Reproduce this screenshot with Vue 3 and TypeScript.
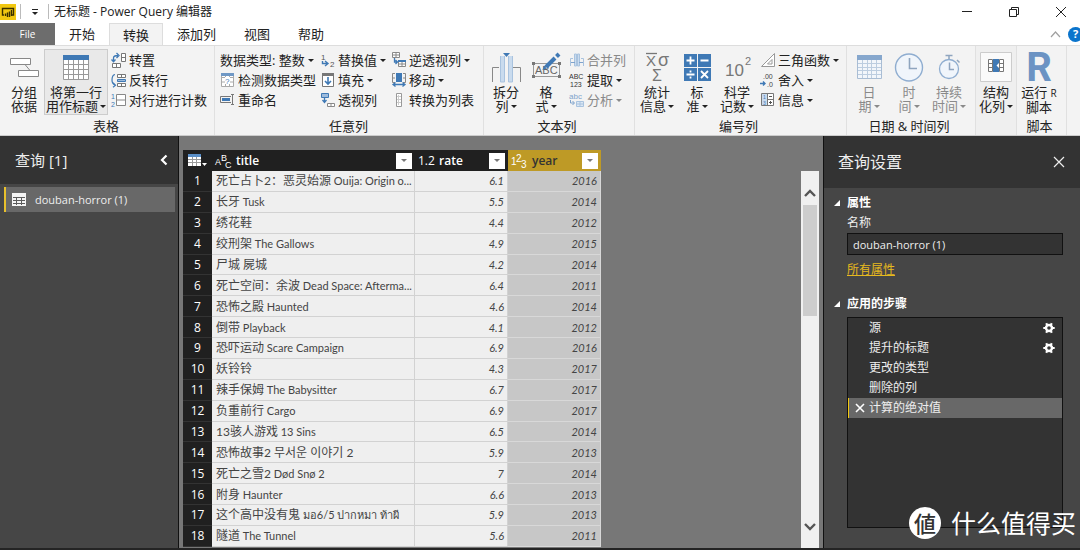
<script setup lang="ts">
import { ref } from 'vue'

interface Film {
  title: string
  latin?: string
  rate: string
  year: number
}

interface Step {
  name: string
  configurable: boolean
}

const tabs: string[] = ['开始', '转换', '添加列', '视图', '帮助']
const activeTab = ref('转换')

const films: Film[] = [
  { title: '死亡占卜2：恶灵始源', latin: 'Ouija: Origin o...', rate: '6.1', year: 2016 },
  { title: '长牙', latin: 'Tusk', rate: '5.5', year: 2014 },
  { title: '绣花鞋', rate: '4.4', year: 2012 },
  { title: '绞刑架', latin: 'The Gallows', rate: '4.9', year: 2015 },
  { title: '尸城 屍城', rate: '4.2', year: 2014 },
  { title: '死亡空间：余波', latin: 'Dead Space: Afterma...', rate: '6.4', year: 2011 },
  { title: '恐怖之殿', latin: 'Haunted', rate: '4.6', year: 2014 },
  { title: '倒带', latin: 'Playback', rate: '4.1', year: 2012 },
  { title: '恐吓运动', latin: 'Scare Campaign', rate: '6.9', year: 2016 },
  { title: '妖铃铃', rate: '4.3', year: 2017 },
  { title: '辣手保姆', latin: 'The Babysitter', rate: '6.7', year: 2017 },
  { title: '负重前行', latin: 'Cargo', rate: '6.9', year: 2017 },
  { title: '13骇人游戏', latin: '13 Sins', rate: '6.5', year: 2014 },
  { title: '恐怖故事2 무서운 이야기 2', rate: '5.9', year: 2013 },
  { title: '死亡之雪2', latin: 'Død Snø 2', rate: '7', year: 2014 },
  { title: '附身', latin: 'Haunter', rate: '6.6', year: 2013 },
  { title: '这个高中没有鬼', latin: 'มอ6/5 ปากหมา ท้าผี', rate: '5.9', year: 2013 },
  { title: '隧道', latin: 'The Tunnel', rate: '5.6', year: 2011 },
]

const steps: Step[] = [
  { name: '源', configurable: true },
  { name: '提升的标题', configurable: true },
  { name: '更改的类型', configurable: false },
  { name: '删除的列', configurable: false },
  { name: '计算的绝对值', configurable: false },
]
const activeStep = ref(4)
const queryName = ref('douban-horror (1)')
</script>

<template>
  <div class="window">
    <header class="titlebar">
      <svg class="logo" width="16" height="16" viewBox="0 0 16 16">
        <rect width="16" height="16" fill="#f2c811" />
        <path d="M4 11H2.500V4.500H13.500V11H12" fill="none" stroke="#3a3000" stroke-width="1.400" />
        <path d="M5.500 12V9.500M7.500 13V8.500M9.500 13V7.500M11.500 12V6" stroke="#3a3000" stroke-width="1.400" />
      </svg>
      <span class="bar"></span>
      <button class="quick" type="button" aria-label="自定义快速访问工具栏">
        <svg width="8" height="8" viewBox="0 0 8 8"><path d="M1 1.500H7" stroke="#222" /><path d="M1 4H7L4 7Z" fill="#222" /></svg>
      </button>
      <span class="bar"></span>
      <h1>无标题 - Power Query 编辑器</h1>
      <div class="controls">
        <button type="button" aria-label="最小化"><svg width="12" height="12" viewBox="0 0 12 12"><path d="M1 5.500H11" stroke="#222" /></svg></button>
        <button type="button" aria-label="还原"><svg width="12" height="12" viewBox="0 0 12 12"><path d="M1.500 3.500H8.500V10.500H1.500ZM3.500 3.500V1.500H10.500V8.500H8.500" fill="none" stroke="#222" /></svg></button>
        <button type="button" aria-label="关闭"><svg width="12" height="12" viewBox="0 0 12 12"><path d="M1 1L11 11M11 1L1 11" stroke="#222" /></svg></button>
      </div>
    </header>

    <nav class="tabs">
      <button class="file" type="button">File</button>
      <button
        v-for="tab in tabs"
        :key="tab"
        type="button"
        class="tab"
        :class="{ active: tab === activeTab }"
        @click="activeTab = tab"
      >{{ tab }}</button>
      <div class="tabs-end">
        <button type="button" aria-label="折叠功能区"><svg width="11" height="7" viewBox="0 0 11 7"><path d="M1 6L5.500 1L10 6" fill="none" stroke="#a0a0a0" stroke-width="1.200" /></svg></button>
        <button type="button" class="help">?</button>
      </div>
    </nav>

    <div class="ribbon">
      <section class="group g-table">
        <div class="tools">
          <button type="button" class="big">
            <svg width="32" height="32" viewBox="0 0 32 32">
              <path d="M2.500 6.500H22.500V12.500H2.500ZM10.500 18.500H30.500V24.500H10.500ZM17 12.500L22 18.500" fill="#fff" stroke="#888" />
            </svg>
            <span>分组<br />依据</span>
          </button>
          <button type="button" class="big selected">
            <svg width="32" height="32" viewBox="0 0 32 32">
              <path d="M3.500 3.500H28.500V27.500H3.500Z" fill="#fff" stroke="#999" />
              <path d="M8.500 8V27M13.500 8V27M18.500 8V27M23.500 8V27M4 12.500H28M4 17.500H28M4 22.500H28" stroke="#999" />
              <rect x="3" y="3" width="26" height="5" fill="#3f79b5" />
            </svg>
            <span>将第一行<br />用作标题<i class="caret"></i></span>
          </button>
          <div class="stack">
            <button type="button" class="small">
              <svg width="16" height="16" viewBox="0 0 16 16">
                <path d="M10.500 1.500H14.500V9.500H10.500ZM10.500 5.500H14.500M1.500 11.500H9.500V15.500H1.500ZM5.500 11.500V15.500" fill="#fff" stroke="#777" />
                <path d="M2.500 9.500V6Q2.500 3.500 7 3.500M0.500 7.500L2.500 9.700L4.500 7.500M5.500 1L8 3.500L5.500 6" fill="none" stroke="#3f79b5" stroke-width="1.300" />
              </svg>
              转置
            </button>
            <button type="button" class="small">
              <svg width="16" height="16" viewBox="0 0 16 16">
                <path d="M6.500 2.500H14.500V5.500H6.500ZM10.500 2.500V5.500M6.500 11.500H14.500V14.500H6.500ZM10.500 11.500V14.500" fill="#fff" stroke="#777" />
                <path d="M6.500 7.500H14.500V9.500H6.500Z" fill="#9dbbdc" stroke="#3f79b5" />
                <path d="M4 2.500Q1 3 1 8Q1 12 4 13M2 10.800L4.500 13.200L2 15.200" fill="none" stroke="#3f79b5" stroke-width="1.200" />
              </svg>
              反转行
            </button>
            <button type="button" class="small">
              <svg width="16" height="16" viewBox="0 0 16 16">
                <text x="0" y="7" font-size="7" fill="#3f79b5">1</text>
                <text x="0" y="15" font-size="7" fill="#3f79b5">2</text>
                <path d="M5.500 2.500H14.500V13.500H5.500ZM5.500 8H14.500" fill="#fff" stroke="#888" />
              </svg>
              对行进行计数
            </button>
          </div>
        </div>
        <h2>表格</h2>
      </section>

      <section class="group g-any">
        <div class="tools">
          <div class="stack wide">
            <button type="button" class="small">数据类型: 整数<i class="caret"></i></button>
            <button type="button" class="small">
              <svg width="16" height="16" viewBox="0 0 16 16">
                <path d="M1.500 1.500H13.500V14.500H1.500ZM1.500 5.500H13.500M1.500 10H13.500M5.500 4V14M9.500 4V14" fill="#fff" stroke="#aaa" />
                <rect x="1" y="1" width="13" height="3" fill="#6f98c5" />
                <rect x="5" y="5" width="5" height="7" fill="#fff" />
                <text x="5" y="12" font-size="8" fill="#3f79b5">?</text>
              </svg>
              检测数据类型
            </button>
            <button type="button" class="small">
              <svg width="16" height="16" viewBox="0 0 16 16">
                <path d="M11 4.500H0.500V10.500H11M11 2.500H14M12.500 2.500V12.500M11 12.500H14" fill="none" stroke="#777" />
                <rect x="2" y="6" width="8" height="3" fill="#3f79b5" />
              </svg>
              重命名
            </button>
          </div>
          <div class="stack mid">
            <button type="button" class="small">
              <svg width="16" height="16" viewBox="0 0 16 16">
                <text x="1" y="8" font-size="8" fill="#555">1</text>
                <text x="10" y="15" font-size="8" fill="#555">2</text>
                <path d="M2.500 9V11.500H7.500M5 9L8 11.500L5 14" fill="none" stroke="#3f79b5" stroke-width="1.400" />
              </svg>
              替换值<i class="caret"></i>
            </button>
            <button type="button" class="small">
              <svg width="16" height="16" viewBox="0 0 16 16">
                <path d="M2.500 1.500H13.500V14.500H2.500Z" fill="#fff" stroke="#777" />
                <rect x="2" y="1" width="12" height="3" fill="#777" />
                <path d="M8 5V12M5 9L8 12L11 9" fill="none" stroke="#3f79b5" stroke-width="1.600" />
              </svg>
              填充<i class="caret"></i>
            </button>
            <button type="button" class="small">
              <svg width="16" height="16" viewBox="0 0 16 16">
                <path d="M1.500 1.500H8.500V5.500H1.500Z" fill="#9dbbdc" stroke="#3f79b5" />
                <path d="M4.500 6V10M2.500 8L4.500 10.500L6.500 8" fill="none" stroke="#3f79b5" stroke-width="1.300" />
                <path d="M7.500 11.500H14.500V14.500H7.500ZM11 11.500V14.500" fill="#fff" stroke="#888" />
              </svg>
              透视列
            </button>
          </div>
          <div class="stack">
            <button type="button" class="small">
              <svg width="16" height="16" viewBox="0 0 16 16">
                <path d="M1.500 0.500H8.500V5.500H1.500ZM1.500 3H8.500M5 0.500V5.500" fill="#fff" stroke="#888" />
                <path d="M3.500 6V10H6M4.500 8L6.500 10L4.500 12" fill="none" stroke="#3f79b5" stroke-width="1.300" />
                <path d="M7.500 8.500H14.500V14.500H7.500ZM7.500 12H14.500M11 10V14.500" fill="#fff" stroke="#888" />
                <rect x="7" y="8" width="8" height="2" fill="#3f79b5" />
              </svg>
              逆透视列<i class="caret"></i>
            </button>
            <button type="button" class="small">
              <svg width="16" height="16" viewBox="0 0 16 16">
                <path d="M4 1.500H1.500V10.500H4M1.500 6H4M12 1.500H14.500V10.500H12M14.500 6H12" fill="none" stroke="#888" />
                <rect x="5" y="1" width="6" height="9" fill="#3f79b5" />
                <path d="M2 12.500H14M4.500 10.500L2 12.500L4.500 14.500M11.500 10.500L14 12.500L11.500 14.500" fill="none" stroke="#3f79b5" stroke-width="1.300" />
              </svg>
              移动<i class="caret"></i>
            </button>
            <button type="button" class="small">
              <svg width="16" height="16" viewBox="0 0 16 16">
                <path d="M5.500 1.500H10.500V14.500H5.500Z" fill="#fff" stroke="#999" />
                <path d="M7.500 3V13M6 4.500H10M6 7.500H10M6 10.500H10" stroke="#ccc" />
              </svg>
              转换为列表
            </button>
          </div>
        </div>
        <h2>任意列</h2>
      </section>

      <section class="group g-text">
        <div class="tools">
          <button type="button" class="big">
            <svg width="32" height="32" viewBox="0 0 32 32">
              <path d="M9 15.500H2.500V30M23 15.500H30.500V30" fill="none" stroke="#888" />
              <path d="M10.500 4V30H14.500V4M18.500 4V30H22.500V4" fill="#c9dbee" stroke="#a9c3df" />
              <path d="M13 1H20L16.500 5Z" fill="#3f79b5" />
            </svg>
            <span>拆分<br />列<i class="caret"></i></span>
          </button>
          <button type="button" class="big">
            <svg width="32" height="32" viewBox="0 0 32 32">
              <path d="M3.500 11.500H29.500V24.500H3.500Z" fill="none" stroke="#999" />
              <path d="M2 10H5V13H2ZM28 10H31V13H28ZM2 23H5V26H2ZM28 23H31V26H28Z" fill="#777" />
              <text x="5" y="22" font-size="11" fill="#666">ABC</text>
              <path d="M16 15L25 6" stroke="#3f79b5" stroke-width="4" />
              <path d="M26.500 4.500L29 2" stroke="#3f79b5" stroke-width="4" />
              <path d="M14 13.500L12.500 18L17 16.500Z" fill="#3f79b5" />
            </svg>
            <span>格<br />式<i class="caret"></i></span>
          </button>
          <div class="stack">
            <button type="button" class="small off">
              <svg width="16" height="16" viewBox="0 0 16 16">
                <path d="M4 6.500H1.500V14M12 6.500H14.500V14" fill="none" stroke="#a9c3df" />
                <path d="M5.500 2V14H7.500V2ZM8.500 2V14H10.500V2Z" fill="#c9dbee" stroke="#a9c3df" />
                <path d="M2 10.500H6M14 10.500H10" stroke="#7fa3cc" />
              </svg>
              合并列
            </button>
            <button type="button" class="small">
              <svg width="16" height="16" viewBox="0 0 16 16">
                <text x="0" y="7" font-size="7" fill="#333">ABC</text>
                <text x="1" y="15" font-size="7" fill="#333">123</text>
              </svg>
              提取<i class="caret"></i>
            </button>
            <button type="button" class="small off">
              <svg width="16" height="16" viewBox="0 0 16 16">
                <text x="0" y="7" font-size="8" fill="#7fa3cc">abc</text>
                <path d="M1.500 8V11H5M3.500 9L5.500 11L3.500 13" fill="none" stroke="#7fa3cc" />
                <path d="M7.500 9.500H14.500V14.500H7.500ZM7.500 12H14.500M11 10V14.500" fill="#dbe7f4" stroke="#a9c3df" />
              </svg>
              分析<i class="caret"></i>
            </button>
          </div>
        </div>
        <h2>文本列</h2>
      </section>

      <section class="group g-number">
        <div class="tools">
          <button type="button" class="big">
            <svg width="32" height="32" viewBox="0 0 32 32">
              <path d="M5 1.500H16" stroke="#777" stroke-width="1.300" />
              <text x="5" y="14" font-size="15" fill="#777">X</text>
              <text x="17" y="14" font-size="18" fill="#777">σ</text>
              <text x="11" y="29" font-size="16" fill="#777">Σ</text>
            </svg>
            <span>统计<br />信息<i class="caret"></i></span>
          </button>
          <button type="button" class="big">
            <svg width="32" height="32" viewBox="0 0 32 32">
              <path d="M3 2H16V15H3ZM17 2H30V15H17ZM3 16H16V29H3ZM17 16H30V29H17Z" fill="#3f79b5" />
              <path d="M5.500 8.500H13.500M9.500 4.500V12.500M19.500 8.500H27.500M5.500 22.500H13.500M20 19L27 26M27 19L20 26M9.500 18.500V20.500M9.500 24.500V26.500" stroke="#fff" stroke-width="1.800" />
            </svg>
            <span>标<br />准<i class="caret"></i></span>
          </button>
          <button type="button" class="big">
            <svg width="32" height="32" viewBox="0 0 32 32">
              <text x="4" y="24" font-size="17" fill="#777">10</text>
              <text x="24" y="13" font-size="11" fill="#777">2</text>
            </svg>
            <span>科学<br />记数<i class="caret"></i></span>
          </button>
          <div class="stack">
            <button type="button" class="small">
              <svg width="16" height="16" viewBox="0 0 16 16">
                <path d="M1.500 14.500H14.500V1.500ZM7.500 12H12V7.500Z" fill="#fff" stroke="#999" />
              </svg>
              三角函数<i class="caret"></i>
            </button>
            <button type="button" class="small">
              <svg width="16" height="16" viewBox="0 0 16 16">
                <text x="3" y="7" font-size="7" fill="#444">.00</text>
                <text x="7" y="15" font-size="7" fill="#444">.0</text>
                <path d="M0 11.500H5M3 9.500L5 11.500L3 13.500" fill="none" stroke="#3f79b5" stroke-width="1.400" />
              </svg>
              舍入<i class="caret"></i>
            </button>
            <button type="button" class="small">
              <svg width="16" height="16" viewBox="0 0 16 16">
                <path d="M1.500 1.500H13.500V13.500H1.500ZM7.500 1.500V13.500M7.500 7.500H13.500" fill="#fff" stroke="#777" />
                <rect x="2" y="2" width="5" height="11" fill="#c9dbee" />
                <text x="3" y="7" font-size="5" fill="#3f79b5">1</text>
                <text x="3" y="13" font-size="5" fill="#3f79b5">3</text>
                <path d="M9 4.500H12M9 10.500H12M10.500 9V12" stroke="#555" />
              </svg>
              信息<i class="caret"></i>
            </button>
          </div>
        </div>
        <h2>编号列</h2>
      </section>

      <section class="group g-date">
        <div class="tools">
          <button type="button" class="big off">
            <svg width="32" height="32" viewBox="0 0 32 32">
              <path d="M4.500 4.500H28.500V26.500H4.500Z" fill="#f2f6fb" stroke="#a9bdd4" />
              <path d="M9.500 8V26M14.500 8V26M18.500 8V26M23.500 8V26M5 11.500H28M5 15.500H28M5 18.500H28M5 22.500H28" stroke="#bccde0" />
              <rect x="4" y="3" width="25" height="5" fill="#86a7cd" />
            </svg>
            <span>日<br />期<i class="caret"></i></span>
          </button>
          <button type="button" class="big off">
            <svg width="32" height="32" viewBox="0 0 32 32">
              <circle cx="16" cy="15.500" r="13.500" fill="#f0f5fb" stroke="#8fadd0" stroke-width="1.400" />
              <path d="M16.500 6V16.500H24" fill="none" stroke="#8fa5bf" stroke-width="1.600" />
            </svg>
            <span>时<br />间<i class="caret"></i></span>
          </button>
          <button type="button" class="big off">
            <svg width="32" height="32" viewBox="0 0 32 32">
              <circle cx="16" cy="17" r="9.500" fill="#f0f5fb" stroke="#8fadd0" stroke-width="1.300" />
              <path d="M12.500 3.500H19.500M16 3.500V7M24 8L26.500 10.500M16.500 10.500V17.500H21" fill="none" stroke="#8fa5bf" stroke-width="1.500" />
            </svg>
            <span>持续<br />时间<i class="caret"></i></span>
          </button>
        </div>
        <h2>日期 &amp; 时间列</h2>
      </section>

      <section class="group g-structured">
        <div class="tools">
          <button type="button" class="big framed">
            <svg width="32" height="32" viewBox="0 0 32 32">
              <path d="M0.500 0.500H31.500V29.500H0.500Z" fill="#fafafa" stroke="#ccc" />
              <path d="M8.500 7.500H12.500V19.500H8.500ZM8.500 11.500H12.500M8.500 15.500H12.500M19.500 7.500H23.500V19.500H19.500ZM19.500 11.500H23.500M19.500 15.500H23.500" fill="#fff" stroke="#777" />
              <rect x="13" y="7" width="6" height="13" fill="#3f79b5" />
              <path d="M19 11L16.500 13.500L19 16" fill="#fff" />
            </svg>
            <span>结构<br />化列<i class="caret"></i></span>
          </button>
        </div>
      </section>

      <section class="group g-script">
        <div class="tools">
          <button type="button" class="big">
            <b class="r-mark">R</b>
            <span>运行 <small>R</small><br />脚本</span>
          </button>
        </div>
        <h2>脚本</h2>
      </section>
    </div>

    <main class="workspace">
      <aside class="queries">
        <header>
          <h2>查询 [1]</h2>
          <button type="button" aria-label="折叠"><svg width="8" height="12" viewBox="0 0 8 12"><path d="M6.500 1.500L2 6L6.500 10.500" fill="none" stroke="#fff" stroke-width="2.200" /></svg></button>
        </header>
        <button type="button" class="query">
          <svg width="14" height="13" viewBox="0 0 14 13">
            <rect width="14" height="13" fill="#f4f4f4" />
            <path d="M1 4.500H13M1 7.500H13M1 10.500H13M4.500 4V12M9.500 4V12" stroke="#5c5c5c" />
          </svg>
          douban-horror (1)
        </button>
      </aside>

      <div class="preview">
        <table>
          <colgroup>
            <col class="c-index" />
            <col class="c-title" />
            <col class="c-rate" />
            <col class="c-year" />
          </colgroup>
          <thead>
            <tr>
              <th class="corner">
                <svg width="20" height="14" viewBox="0 0 20 14">
                  <rect width="13" height="12" fill="#fff" />
                  <rect width="13" height="3" fill="#5b8fc7" />
                  <path d="M0 5.500H13M0 8.500H13M4.500 3V12M8.500 3V12" stroke="#999" />
                  <path d="M14 9H19L16.500 12Z" fill="#fff" />
                </svg>
              </th>
              <th>
                <div class="head">
                  <svg class="kind" width="16" height="16" viewBox="0 0 16 16"><g fill="#fff" font-size="9"><text x="0" y="12">A</text><text x="6" y="8">B</text><text x="10" y="15">C</text></g></svg>
                  <span>title</span>
                  <button type="button" aria-label="筛选 title"><i class="caret"></i></button>
                </div>
              </th>
              <th>
                <div class="head">
                  <span class="kind decimal">1.2</span>
                  <span>rate</span>
                  <button type="button" aria-label="筛选 rate"><i class="caret"></i></button>
                </div>
              </th>
              <th class="picked">
                <div class="head">
                  <svg class="kind" width="16" height="16" viewBox="0 0 16 16"><g fill="#fff" font-size="10"><text x="0" y="12">1</text><text x="5" y="9">2</text><text x="10" y="15">3</text></g></svg>
                  <span>year</span>
                  <button type="button" aria-label="筛选 year"><i class="caret"></i></button>
                </div>
              </th>
            </tr>
          </thead>
          <tbody>
            <tr v-for="(film, i) in films" :key="film.title">
              <th scope="row">{{ i + 1 }}</th>
              <td>{{ film.title }}<span v-if="film.latin" class="latin">&nbsp;{{ film.latin }}</span></td>
              <td class="num">{{ film.rate }}</td>
              <td class="num picked">{{ film.year }}</td>
            </tr>
          </tbody>
        </table>
        <div class="scroll">
          <svg width="12" height="8" viewBox="0 0 12 8"><path d="M1 7L6 2L11 7" fill="none" stroke="#555" stroke-width="2.400" /></svg>
          <div class="track"><div class="thumb"></div></div>
          <svg width="12" height="8" viewBox="0 0 12 8"><path d="M1 1L6 6L11 1" fill="none" stroke="#555" stroke-width="2.400" /></svg>
        </div>
      </div>

      <aside class="settings">
        <header>
          <h2>查询设置</h2>
          <button type="button" aria-label="关闭查询设置"><svg width="12" height="12" viewBox="0 0 12 12"><path d="M1 1L11 11M11 1L1 11" stroke="#eee" stroke-width="1.200" /></svg></button>
        </header>
        <div class="section">
          <h3><svg width="6" height="6" viewBox="0 0 6 6"><path d="M6 0V6H0Z" fill="#fff" /></svg>属性</h3>
          <label for="query-name">名称</label>
          <input id="query-name" v-model="queryName" type="text" />
          <a href="#">所有属性</a>
        </div>
        <div class="section steps">
          <h3><svg width="6" height="6" viewBox="0 0 6 6"><path d="M6 0V6H0Z" fill="#fff" /></svg>应用的步骤</h3>
          <ol>
            <li v-for="(step, i) in steps" :key="step.name" :class="{ active: i === activeStep }">
              <span class="remove"><svg v-if="i === activeStep" width="10" height="10" viewBox="0 0 10 10"><path d="M1 1L9 9M9 1L1 9" stroke="#fff" stroke-width="1.600" /></svg></span>
              <button type="button" class="step" @click="activeStep = i">{{ step.name }}</button>
              <button v-if="step.configurable" type="button" class="gear" :aria-label="`设置 ${step.name}`">
                <svg width="12" height="12" viewBox="0 0 12 12">
                  <circle cx="6" cy="6" r="3" fill="none" stroke="#fff" stroke-width="2.400" />
                  <path d="M3.200 1.200L4.200 3M8.800 1.200L7.800 3M3.200 10.800L4.200 9M8.800 10.800L7.800 9M0.300 6H2.500M9.500 6H11.700" stroke="#fff" stroke-width="2.200" />
                </svg>
              </button>
            </li>
          </ol>
        </div>
      </aside>
    </main>

    <div class="watermark"><span class="badge">値</span><span>什么值得买</span></div>
  </div>
</template>

<style>
body {
  margin: 0;
}
</style>

<style scoped>
.window {
  position: relative;
  display: flex;
  flex-direction: column;
  height: 100vh;
  overflow: hidden;
  background: #fff;
  color: #222;
  font: 13px/14px "Open Sans", "Noto Sans CJK SC", sans-serif;
}
h1, h2, h3, ol {
  margin: 0;
  padding: 0;
  font-weight: 400;
}
button {
  padding: 0;
  border: 0;
  background: none;
  color: inherit;
  font: inherit;
}
svg {
  display: block;
  flex: none;
  overflow: visible;
}
svg text {
  font-family: "Liberation Sans", sans-serif;
  font-weight: 400;
}
.caret {
  display: inline-block;
  flex: none;
  margin-left: 4px;
  border: 3px solid transparent;
  border-top-color: currentColor;
  border-bottom: 0;
  vertical-align: 3px;
}

.titlebar {
  display: flex;
  flex: none;
  align-items: center;
  height: 23px;
}
.titlebar h1 {
  margin-left: 5px;
  font-size: 12px;
}
.bar {
  width: 1px;
  height: 15px;
  margin-left: 4px;
  background: #bbb;
}
.quick {
  margin: 0 5px 0 10px;
}
.controls {
  display: flex;
  gap: 35px;
  margin-left: auto;
  margin-right: 13px;
}

.tabs {
  display: flex;
  flex: none;
  height: 22px;
}
.tab {
  padding: 0 14px;
}
.tab.active {
  padding: 0 13px;
  border: 1px solid #ddd;
  border-bottom: 0;
  background: #f3f3f3;
}
.file {
  width: 55px;
  background: #6d6d6d;
  color: #fff;
  font-size: 10px;
}
.tabs-end {
  display: flex;
  align-items: center;
  gap: 7px;
  margin-left: auto;
  margin-right: -3px;
}
.help {
  width: 15px;
  height: 15px;
  border-radius: 50%;
  background: #0a74cc;
  color: #fff;
  font-size: 11px;
  font-weight: 700;
}

.ribbon {
  display: flex;
  flex: none;
  height: 89px;
  border-top: 1px solid #ddd;
  border-bottom: 1px solid #ccc;
  background: #f3f3f3;
}
.group {
  display: flex;
  flex: none;
  flex-direction: column;
  box-sizing: border-box;
  border-right: 1px solid #e0e0e0;
  padding: 3px 0 0 2px;
}
.group h2 {
  margin-right: 6px;
  font-size: 13px;
  line-height: 16px;
  text-align: center;
}
.g-table { width: 215px; padding-left: 4px; }
.g-any { width: 269px; padding-left: 5px; }
.g-text { width: 151px; }
.g-number { width: 212px; }
.g-date { width: 129px; }
.g-structured { width: 41px; padding-left: 0; background: #efefef; }
.g-script { width: 50px; }
.tools {
  display: flex;
  height: 69px;
}
.big {
  display: flex;
  flex-direction: column;
  align-items: center;
  width: 40px;
  padding-top: 3px;
  white-space: nowrap;
}
.big span {
  margin-top: 1px;
}
.big .caret {
  margin-left: 2px;
}
.selected {
  box-sizing: border-box;
  width: 64px;
  height: 66px;
  padding-top: 2px;
  border: 1px solid #ccc;
  background: #e9e9e9;
}
.off {
  color: #8a8a8a;
}
.r-mark {
  height: 32px;
  color: #6b93c3;
  font: 700 40px/32px Roboto, sans-serif;
}
.big small {
  font-size: 10px;
}
.stack {
  display: flex;
  flex-direction: column;
  padding: 1px 0 0 3px;
}
.small {
  display: flex;
  align-items: center;
  gap: 2px;
  height: 20px;
  white-space: nowrap;
}
.small .caret {
  margin-left: 1px;
}
.g-any .stack { padding-left: 0; }
.wide { width: 100px; }
.mid { width: 71px; }

.workspace {
  display: flex;
  flex: 1;
  min-height: 0;
  border-bottom: 2px solid #242424;
  background: #777;
}
.queries {
  width: 178px;
  border-right: 1px solid #111;
  background: #464646;
  color: #eee;
}
.queries header {
  display: flex;
  align-items: center;
  justify-content: space-between;
  height: 48px;
  padding: 0 10px 0 15px;
  background: #333;
}
.queries h2 {
  font-size: 15px;
  line-height: 20px;
}
.query {
  display: flex;
  align-items: center;
  gap: 9px;
  box-sizing: border-box;
  width: 171px;
  height: 25px;
  margin: 3px 0 0 4px;
  padding-left: 6px;
  border-left: 2px solid #e8c02c;
  background: #686868;
  font-size: 11px;
}

.preview {
  display: flex;
  flex: 1;
  justify-content: space-between;
  min-width: 0;
  padding: 14px 4px 0;
}
table {
  width: 418px;
  height: calc(100% - 1px);
  border-collapse: separate;
  border-spacing: 0;
  table-layout: fixed;
  color: #444;
  font: 12px/14px Lato, "Noto Sans CJK SC", "Noto Sans CJK KR", sans-serif;
}
.c-index { width: 29px; }
.c-title { width: 203px; }
.c-rate { width: 93px; }
.c-year { width: 93px; }
th, td {
  padding: 1px 4px 0;
  overflow: hidden;
  white-space: nowrap;
}
thead th {
  height: 21px;
  padding: 0 3px;
  background: #202020;
  color: #fff;
  font: 600 12px/14px "Open Sans", sans-serif;
}
thead th.corner {
  padding: 0 0 0 5px;
}
thead th.picked {
  background: #be9a26;
  color: #333;
}
.head {
  display: flex;
  align-items: center;
}
.kind {
  flex: none;
  width: 16px;
  margin-right: 5px;
}
.kind.decimal {
  font-weight: 400;
}
.head button {
  display: flex;
  align-items: center;
  justify-content: center;
  width: 16px;
  height: 16px;
  margin-left: auto;
  background: #fff;
  color: #777;
}
.head .caret {
  margin: 0;
}
tbody th {
  border-bottom: 1px solid #333;
  background: #202020;
  color: #fff;
  font-family: "Open Sans", sans-serif;
  font-weight: 400;
  text-align: center;
}
td {
  border-right: 1px solid #d2d2d2;
  border-bottom: 1px solid #d2d2d2;
  background: #efefef;
}
.latin,
td.num {
  font-size: 11px;
}
td.num {
  font-style: italic;
  text-align: right;
  padding-right: 3px;
}
td.picked {
  border-color: #d8d8d8;
  background: #c7c7c7;
}
.scroll {
  display: flex;
  flex-direction: column;
  align-items: center;
  width: 18px;
  margin-top: 21px;
  padding: 18px 0 17px;
  box-sizing: border-box;
  background: #f0f0f0;
}
.track {
  flex: 1;
  width: 14px;
  padding-top: 8px;
}
.thumb {
  height: 35%;
  background: #cdcdcd;
}

.settings {
  display: flex;
  flex-direction: column;
  box-sizing: border-box;
  width: 257px;
  border-left: 1px solid #111;
  background: #464646;
  color: #eee;
  font-size: 12px;
}
.settings header {
  display: flex;
  flex: none;
  align-items: center;
  justify-content: space-between;
  height: 52px;
  padding: 0 15px 0 14px;
  background: #333;
}
.settings header h2 {
  font-size: 16px;
  line-height: 20px;
}
.section {
  display: flex;
  flex-direction: column;
  align-items: flex-start;
  padding: 5px 17px 0 23px;
}
.section h3 {
  display: flex;
  align-items: center;
  gap: 7px;
  margin-left: -13px;
  color: #fff;
  font-size: 12px;
  font-weight: 700;
  line-height: 20px;
}
.section label {
  line-height: 20px;
}
.section input {
  box-sizing: border-box;
  width: 100%;
  height: 22px;
  padding: 0 5px;
  border: 1px solid #111;
  background: #333;
  color: #eee;
  font: inherit;
  font-size: 11px;
}
.section a {
  margin-top: 5px;
  color: #e6b91e;
  line-height: 20px;
}
.steps {
  flex: 1;
  padding-top: 14px;
  padding-bottom: 20px;
}
ol {
  flex: 1;
  box-sizing: border-box;
  width: 100%;
  margin-top: 3px;
  border: 1px solid #111;
  background: #333;
  list-style: none;
}
li {
  display: flex;
  align-items: center;
  box-sizing: border-box;
  height: 20px;
  padding-right: 7px;
  border-left: 1px solid transparent;
}
li.active {
  border-left-color: #f2c811;
  background: #686868;
}
.remove {
  width: 14px;
  padding-left: 6px;
}
.gear {
  margin-left: auto;
}

.watermark {
  position: absolute;
  right: 4px;
  bottom: 11px;
  display: flex;
  align-items: center;
  gap: 10px;
  color: #fff;
  font-size: 25px;
  line-height: 32px;
}
.badge {
  width: 32px;
  border-radius: 50%;
  background: #fff;
  color: #333;
  font-size: 22px;
  font-weight: 500;
  text-align: center;
}
</style>
